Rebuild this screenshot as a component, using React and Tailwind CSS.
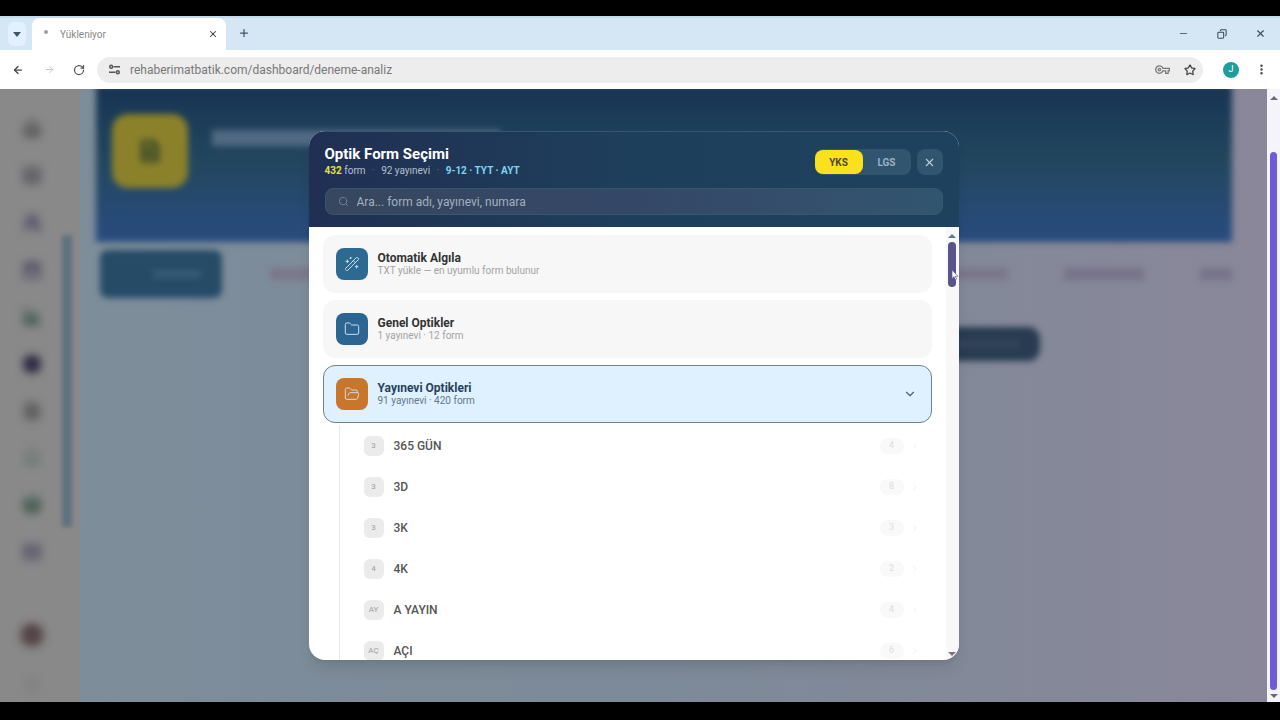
import { useState } from 'react';
import {
  ArrowLeft,
  ArrowRight,
  BarChart3,
  Bell,
  BookOpen,
  Calendar,
  ChevronDown,
  ChevronRight,
  Copy,
  EllipsisVertical,
  FileText,
  Folder,
  FolderOpen,
  Home,
  Layers,
  Mail,
  Minus,
  Plus,
  RotateCw,
  Search,
  Settings,
  Star,
  Target,
  User,
  Users,
  WandSparkles,
  X,
} from 'lucide-react';
import { MdOutlineVpnKey } from 'react-icons/md';

const sideLinks = [
  { name: 'Ana Sayfa', icon: Home, color: 'text-[#5c5c5c]' },
  { name: 'Kitaplar', icon: BookOpen, color: 'text-[#545258]' },
  { name: 'Öğrenciler', icon: Users, color: 'text-[#5c5870]' },
  { name: 'Takvim', icon: Calendar, color: 'text-[#57536a]' },
  { name: 'Raporlar', icon: BarChart3, color: 'text-[#4a6056]' },
  { name: 'Denemeler', icon: Target, color: 'text-[#2f2a46]' },
  { name: 'Belgeler', icon: FileText, color: 'text-[#5f5f5f]' },
  { name: 'Bildirimler', icon: Bell, color: 'text-[#6b7873]' },
  { name: 'Konular', icon: Layers, color: 'text-[#4a6056]' },
  { name: 'Mesajlar', icon: Mail, color: 'text-[#5b576c]' },
];

const groups = [
  {
    id: 'auto',
    title: 'Otomatik Algıla',
    detail: 'TXT yükle — en uyumlu form bulunur',
    icon: WandSparkles,
    tile: 'bg-[#2d6a92]',
  },
  {
    id: 'general',
    title: 'Genel Optikler',
    detail: '1 yayınevi · 12 form',
    icon: Folder,
    tile: 'bg-[#2c6592]',
  },
  {
    id: 'publisher',
    title: 'Yayınevi Optikleri',
    detail: '91 yayınevi · 420 form',
    icon: FolderOpen,
    tile: 'bg-[#c9752a]',
  },
];

const publishers = [
  { badge: '3', name: '365 GÜN', count: 4 },
  { badge: '3', name: '3D', count: 8 },
  { badge: '3', name: '3K', count: 3 },
  { badge: '4', name: '4K', count: 2 },
  { badge: 'AY', name: 'A YAYIN', count: 4 },
  { badge: 'AÇ', name: 'AÇI', count: 6 },
];

function TabStrip() {
  return (
    <div className="flex h-[34px] items-end border-t-2 border-[#c3dbe8] bg-[#d5e7f5] pr-[14px]">
      <button aria-label="Sekme ara" className="mb-1 ml-2 flex h-6 w-[18px] items-center justify-center rounded-md bg-[#e2f1fd]">
        <svg width="8" height="5" viewBox="0 0 8 5" fill="#3f5568"><path d="M0 0h8L4 5z" /></svg>
      </button>
      <div className="ml-[6px] flex h-full w-[194px] items-center rounded-t-lg bg-white pl-3 pr-2">
        <span className="mb-1 h-1 w-1 rounded-full bg-[#a0a0a0]" />
        <span className="ml-3 flex-1 text-[10px] text-[#888]">Yükleniyor</span>
        <button aria-label="Sekmeyi kapat"><X size={10} color="#333" strokeWidth={2.5} /></button>
      </div>
      <button aria-label="Yeni sekme" className="mb-[11px] ml-3"><Plus size={12} color="#3f5568" strokeWidth={2.5} /></button>
      <div className="mb-[11px] ml-auto flex items-center gap-7">
        <button aria-label="Küçült"><Minus size={11} color="#4f6070" /></button>
        <button aria-label="Geri yükle"><Copy size={10} color="#3a4a58" strokeWidth={2.5} className="-scale-x-100" /></button>
        <button aria-label="Kapat"><X size={11} color="#3f4f5c" strokeWidth={2.5} /></button>
      </div>
    </div>
  );
}

function AddressBar() {
  return (
    <div className="flex h-[39px] items-center bg-white pl-3">
      <button aria-label="Geri"><ArrowLeft size={12} color="#444" strokeWidth={2.5} /></button>
      <button aria-label="İleri" className="ml-5"><ArrowRight size={11} color="#c4c4c4" /></button>
      <button aria-label="Yenile" className="ml-[18px]"><RotateCw size={12} color="#555" strokeWidth={2.5} /></button>
      <div className="ml-3 flex h-[26px] flex-1 items-center rounded-full bg-[#ededed] pl-3 pr-[7px]">
        <svg width="11" height="11" viewBox="0 0 12 12" fill="none" stroke="#555" strokeWidth="1.6">
          <circle cx="2.4" cy="3" r="1.6" />
          <path d="M5 3h7M0 9h7" />
          <circle cx="9.6" cy="9" r="1.6" />
        </svg>
        <input
          aria-label="Adres"
          defaultValue="rehaberimatbatik.com/dashboard/deneme-analiz"
          className="ml-[10px] min-w-0 flex-1 bg-transparent text-xs text-[#777] outline-none"
        />
        <MdOutlineVpnKey size={15} color="#777" />
        <button aria-label="Yer işareti" className="ml-[14px]"><Star size={12} color="#444" strokeWidth={2.5} /></button>
      </div>
      <button className="ml-5 flex h-4 w-4 items-center justify-center rounded-full bg-[#1f9c9c] text-[9px] text-white">J</button>
      <button aria-label="Menü" className="mr-3 ml-4"><EllipsisVertical size={13} color="#444" strokeWidth={2.5} /></button>
    </div>
  );
}

function Sidebar() {
  return (
    <aside className="flex w-20 shrink-0 justify-between bg-[#898989]">
      <nav className="flex flex-col items-center gap-[29px] pt-[31px] pl-5 blur-[4px]">
        {sideLinks.map(({ name, icon: Icon, color }) => (
          <a key={name} href="#" aria-label={name} className={color}>
            <Icon size={18} strokeWidth={5} />
          </a>
        ))}
        <span className="mt-auto flex h-6 w-6 items-center justify-center rounded-full bg-[#5c4a4c] text-[#3c3c3c]">
          <User size={16} strokeWidth={3} />
        </span>
        <Settings size={18} className="mb-2 text-[#7c7c7c]" />
      </nav>
      <div className="mt-[146px] mr-2 h-[292px] w-[10px] bg-[#60727f] blur-[2px]" />
    </aside>
  );
}

// the page behind the dialog, dimmed and out of focus
function Dashboard() {
  return (
    <div className="flex h-full bg-[#898799]">
      <Sidebar />
      <main className="relative min-w-0 flex-1 bg-linear-to-r from-[#7d8d9a] via-[#7d8a99] to-[#898799] pr-[35px] pl-4">
        <div className="blur-[3px]">
          <header className="-mt-1 flex h-[157px] gap-6 bg-linear-to-b from-[#173453] via-[#23475f] to-[#294c80] pt-[29px] pl-4">
            <div className="flex h-[74px] w-[76px] items-center justify-center rounded-2xl bg-[#8b812b]">
              <FileText size={24} color="#4c5528" strokeWidth={4} />
            </div>
            <div className="mt-4 h-4 w-72 bg-[#526983]" />
          </header>
          <div className="mt-2 flex items-center pl-1">
            <div className="flex h-12 w-[122px] items-center justify-center rounded-lg bg-[#264b67] pl-8">
              <span className="h-2 w-12 bg-[#355b76]" />
            </div>
            <span className="ml-12 h-3 w-16 bg-[#7b778b]" />
            <span className="mr-14 ml-auto h-3 w-16 bg-[#7b778b]" />
            <span className="mr-14 h-3 w-20 bg-[#777489]" />
            <span className="h-3 w-8 bg-[#777489]" />
          </div>
          <div className="mt-[29px] mr-[192px] ml-auto flex h-[34px] w-48 items-center justify-end rounded-xl bg-[#283b50] pr-5">
            <span className="h-2 w-16 bg-[#34445a]" />
          </div>
        </div>
      </main>
    </div>
  );
}

function DialogHeader({ exam, setExam }) {
  return (
    <div className="border-t border-[#365674] bg-linear-to-r from-[#202f53] via-[#1e3f5c] to-[#1e425e] px-4 pt-[13px] pb-3">
      <div className="flex items-center justify-between">
        <div>
          <h2 className="text-[15px] leading-[18px] font-bold text-white">Optik Form Seçimi</h2>
          <p className="text-[10px] leading-4 text-[#b3c0cf]">
            <b className="text-[#e3e32f]">432</b> form<span className="mx-1 text-[#60788f]"> · </span>
            92 yayınevi<span className="mx-1 text-[#60788f]"> · </span>
            <b className="text-[#7fd3ef]">9-12 · TYT · AYT</b>
          </p>
        </div>
        <div className="flex items-center gap-[6px]">
          <div className="flex h-[26px] items-center rounded-lg bg-[#31546f] text-[10px] font-bold">
            {['YKS', 'LGS'].map((name) => (
              <button
                key={name}
                onClick={() => setExam(name)}
                className={`h-6 w-12 rounded-lg ${exam === name ? 'bg-[#fae11e] text-[#4f4a20]' : 'text-[#9db2c3]'}`}
              >
                {name}
              </button>
            ))}
          </div>
          <button aria-label="Kapat" className="flex h-[26px] w-[26px] items-center justify-center rounded-lg bg-[#31546f]">
            <X size={13} color="#bccbd8" />
          </button>
        </div>
      </div>
      <label className="mt-[9px] flex h-[27px] items-center rounded-lg border border-[#35576f] bg-linear-to-r from-[#37475f] via-[#354767] to-[#32556f] pl-3">
        <Search size={11} color="#71859a" />
        <input
          aria-label="Form ara"
          placeholder="Ara... form adı, yayınevi, numara"
          className="ml-2 flex-1 bg-transparent text-xs outline-none placeholder:text-[#a3b0bf]"
        />
      </label>
    </div>
  );
}

function GroupCard({ group, open, onClick }) {
  const Icon = group.icon;
  return (
    <button
      onClick={onClick}
      className={`flex h-[58px] w-full shrink-0 items-center gap-[10px] rounded-xl border px-3 text-left ${
        open ? 'border-[#6f8389] bg-[#dff0fe]' : 'border-[#f7f7f7] bg-[#f7f7f7]'
      }`}
    >
      <span className={`flex h-8 w-8 items-center justify-center rounded-lg ${group.tile}`}>
        <Icon size={16} color="#c9deec" strokeWidth={1.5} />
      </span>
      <span className="flex-1">
        <span className={`block text-xs leading-[14px] font-bold ${open ? 'text-[#27425c]' : 'text-[#333]'}`}>{group.title}</span>
        <span className={`block text-[10px] leading-3 ${open ? 'text-[#62788a]' : 'text-[#a3a3a3]'}`}>{group.detail}</span>
      </span>
      {open && <ChevronDown size={14} color="#47637a" className="mr-[2px]" />}
    </button>
  );
}

function DialogScrollbar() {
  return (
    <div className="flex w-[13px] shrink-0 flex-col items-center bg-[#f8f8f8] pt-[7px] pb-1">
      <svg width="8" height="4" viewBox="0 0 8 4" fill="#5e7a88"><path d="M0 4h8L4 0z" /></svg>
      <div className="relative mt-1 h-[45px] w-2 rounded-full bg-[#59548a]">
        <svg width="7" height="10" viewBox="0 0 7 10" className="absolute top-7 left-1" fill="#fff" stroke="#59548a" strokeWidth=".6">
          <path d="M0 0v8.500l2-1.800 1.300 3 1.300-.6-1.300-2.800H6z" />
        </svg>
      </div>
      <svg width="8" height="4" viewBox="0 0 8 4" fill="#777" className="mt-auto"><path d="M0 0h8L4 4z" /></svg>
    </div>
  );
}

function FormDialog() {
  const [exam, setExam] = useState('YKS');
  const [openId, setOpenId] = useState('publisher');

  return (
    <div role="dialog" aria-label="Optik Form Seçimi" className="flex h-[calc(100%-84px)] w-[650px] flex-col overflow-hidden rounded-2xl bg-white shadow-lg">
      <DialogHeader exam={exam} setExam={setExam} />
      <div className="flex min-h-0 flex-1">
        <div className="flex flex-1 flex-col gap-[7px] overflow-hidden px-[14px] pt-2">
          {groups.map((group) => (
            <GroupCard key={group.id} group={group} open={openId === group.id} onClick={() => setOpenId(group.id)} />
          ))}
          {openId === 'publisher' && (
            <ul className="-mt-[5px] ml-4 shrink-0 border-l border-[#e8e8e8] pl-6">
              {publishers.map((p) => (
                <li key={p.name}>
                  <button className="flex h-[41px] w-full items-center text-left">
                    <span className="flex h-5 w-5 items-center justify-center rounded-md bg-[#ebebeb] text-[8px] text-[#a0a0a0]">{p.badge}</span>
                    <span className="ml-[10px] flex-1 text-xs font-medium text-[#555]">{p.name}</span>
                    <span className="flex h-4 w-6 items-center justify-center rounded-full bg-[#f9f9f9] text-[9px] text-[#ddd]">{p.count}</span>
                    <ChevronRight size={10} color="#ececec" className="mr-3 ml-[6px]" />
                  </button>
                </li>
              ))}
            </ul>
          )}
        </div>
        <DialogScrollbar />
      </div>
    </div>
  );
}

export default function App() {
  return (
    <div className="flex h-screen flex-col bg-black pt-4 pb-[18px] font-[Roboto,sans-serif]">
      <TabStrip />
      <AddressBar />
      <div className="flex min-h-0 flex-1">
        <div className="relative min-w-0 flex-1 overflow-hidden">
          <Dashboard />
          <div className="absolute inset-0 flex items-center justify-center">
            <FormDialog />
          </div>
        </div>
        <div className="flex w-[13px] shrink-0 flex-col items-center bg-[#f4f4fa] pt-[7px] pb-1">
          <svg width="8" height="4" viewBox="0 0 8 4" fill="#6a6a80"><path d="M0 4h8L4 0z" /></svg>
          <div className="mt-[52px] mb-1 w-[7px] flex-1 rounded-full bg-[#6f5bd9]" />
          <svg width="8" height="4" viewBox="0 0 8 4" fill="#6a6a6a"><path d="M0 0h8L4 4z" /></svg>
        </div>
      </div>
    </div>
  );
}
